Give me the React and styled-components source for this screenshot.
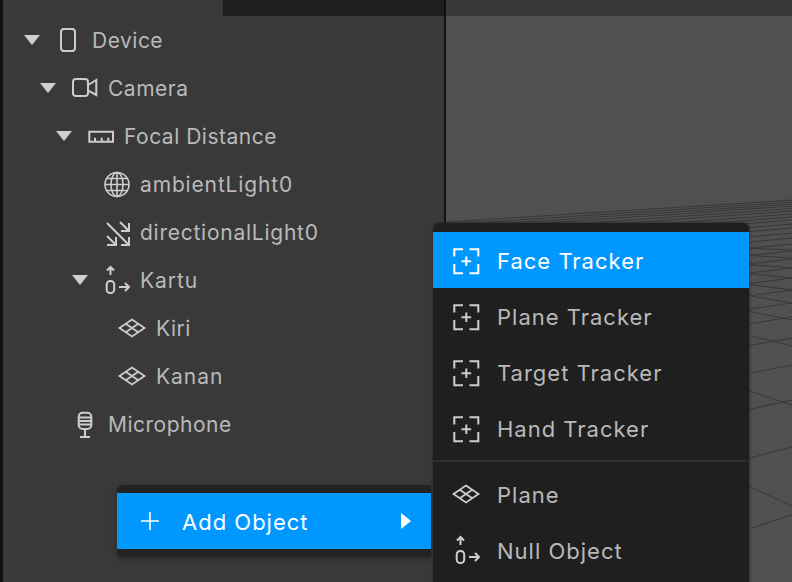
import styled, { createGlobalStyle } from "styled-components";

const Global = createGlobalStyle`
    html, body { margin: 0; padding: 0; background: #393939; }
    * { box-sizing: border-box; }
`;
const Screen = styled.div`
    width: 792px;
    height: 582px;
    overflow: hidden;
    position: relative;
    display: flex;
    font-family: Inter, "Noto Sans", sans-serif;
`;
const Sidebar = styled.aside`
    width: 446px;
    flex: none;
    background: #393939;
    border-left: 3px solid #111;
    border-right: 2px solid #111;
    display: flex;
    flex-direction: column;
`;
const LeftTab = styled.div`
    height: 16px;
    flex: none;
    margin-left: 220px;
    background: #1f1f1f;
`;
const Tree = styled.ul`
    list-style: none;
    margin: 0;
    padding: 0;
`;
const Row = styled.li`
    height: 48px;
    display: flex;
    align-items: center;
    padding-left: ${(p) => p.$indent}px;
    color: #b9b9b9;
    font-size: 21px;
    letter-spacing: ${(p) => p.$track || 0.5}px;
`;
const Caret = styled.span`
    width: 0;
    height: 0;
    flex: none;
    margin-right: 12px;
    border-left: 8px solid transparent;
    border-right: 8px solid transparent;
    border-top: 10px solid #cfcfcf;
`;
const IconSlot = styled.span`
    width: 32px;
    height: 32px;
    flex: none;
    margin-right: 8px;
    display: flex;
    align-items: center;
    justify-content: center;
    color: #cdcdcd;
`;
const Viewport = styled.main`
    flex: 1;
    background: #505050;
    display: flex;
    flex-direction: column;
`;
const RightTab = styled.div`
    height: 16px;
    flex: none;
    background: #383838;
`;
const Grid = styled.svg`
    flex: 1;
    width: 100%;
    display: block;
`;
const Trigger = styled.div`
    position: absolute;
    left: 117px;
    top: 485px;
    width: 314px;
    padding: 8px 0;
    background: #232323;
    border-radius: 6px 0 0 6px;
    box-shadow: 0 2px 6px rgba(0, 0, 0, 0.3);
`;
const TriggerRow = styled.div`
    height: 56px;
    display: flex;
    align-items: center;
    padding-left: 17px;
    background: #0098ff;
    color: #fff;
    font-size: 22px;
    letter-spacing: 1px;
`;
const TriggerLabel = styled.span`
    flex: 1;
    margin-left: 16px;
    padding-top: 2px;
`;
const Arrow = styled.span`
    width: 0;
    height: 0;
    margin-right: 20px;
    border-top: 8px solid transparent;
    border-bottom: 8px solid transparent;
    border-left: 10px solid #fff;
`;
const Menu = styled.div`
    position: absolute;
    left: 433px;
    top: 223px;
    width: 316px;
    height: 380px;
    padding-top: 9px;
    background: #1f1f1f;
    border-radius: 6px 6px 0 0;
    box-shadow: 0 0 2px 1px rgba(46, 46, 46, 0.9);
`;
const MenuItem = styled.div`
    height: 56px;
    display: flex;
    align-items: center;
    padding: 2px 0 0 17px;
    gap: 15px;
    font-size: 22px;
    letter-spacing: 1px;
    color: ${(p) => (p.$active ? "#fff" : "#b9b9b9")};
    background: ${(p) => (p.$active ? "#0098ff" : "transparent")};
`;
const MenuIcon = styled.span`
    width: 32px;
    height: 32px;
    display: flex;
    align-items: center;
    justify-content: center;
    margin-top: ${(p) => (p.$lift ? -2 : 0)}px;
    color: ${(p) => (p.$active ? "#fff" : "#cdcdcd")};
`;
const Divider = styled.div`
    height: 2px;
    margin: 4px 0;
    background: #2e2e2e;
`;

const Svg = ({ children, stroke = 2 }) => (
    <svg width="32" height="32" viewBox="0 0 32 32" fill="none" stroke="currentColor" strokeWidth={stroke}>
        {children}
    </svg>
);
const PhoneIcon = () => <Svg><rect x="9" y="5" width="14" height="22" rx="3" /></Svg>;
const CameraIcon = () => (
    <Svg>
        <rect x="5" y="7" width="15" height="17" rx="3" />
        <path d="M20.300 13l8-5v15l-8-4.300" />
    </Svg>
);
const RulerIcon = () => (
    <Svg><path d="M5.300 11.700H29v10H5.300zM11 21.700v-4M17.700 21.700v-4M24.300 21.700v-4" /></Svg>
);
const GlobeIcon = () => (
    <Svg stroke={1.6}>
        <circle cx="17" cy="16.500" r="12" />
        <ellipse cx="17" cy="16.500" rx="6" ry="12" />
        <path d="M17 4.500v24M5 16.500h24M7 10.500h20M7 22.500h20" />
    </Svg>
);
const LightIcon = () => (
    <Svg>
        <path d="M7 7l22 22M21 29h8v-8M20 6l9 9M21 15h8V7M7 20l9 9M7 29h9v-8" />
    </Svg>
);
const NullIcon = () => (
    <Svg>
        <path d="M10.500 11V3M7 6.500l3.500-3.500 3.500 3.500" />
        <rect x="6.700" y="17" width="7.500" height="12" rx="3.500" />
        <path d="M19 23h9.500M25 19l4 4-4 4" />
    </Svg>
);
const PlaneIcon = () => (
    <Svg stroke={1.8}>
        <path d="M16 7.500L28.500 16 16 24.500 3.500 16zM9.750 11.750l12.500 8.500M22.250 11.750l-12.500 8.500" />
    </Svg>
);
const MicIcon = () => (
    <Svg>
        <rect x="10.700" y="4.700" width="12.600" height="16.300" rx="4" />
        <path d="M10.700 9.500h12.600M10.700 13h12.600M10.700 16.500h12.600M17 21v8M12 29h10" />
    </Svg>
);
const TrackerIcon = () => (
    <Svg>
        <path d="M4.300 11.600V4.300H13M19.500 4.300h8.800v7.300M28.300 19v9.300h-8.800M13 28.300H4.300V19M16.300 11.500v9.600M11.500 16.300h9.600" />
    </Svg>
);
const PlusIcon = () => (
    <Svg stroke={1.6}><path d="M16 7v18M7 16h18" /></Svg>
);

const rows = [
    { label: "Device", indent: 21, caret: true, icon: <PhoneIcon /> },
    { label: "Camera", indent: 37, caret: true, icon: <CameraIcon /> },
    { label: "Focal Distance", indent: 53, caret: true, icon: <RulerIcon /> },
    { label: "ambientLight0", indent: 97, track: 0.85, icon: <GlobeIcon /> },
    { label: "directionalLight0", indent: 97, track: 0.75, icon: <LightIcon /> },
    { label: "Kartu", indent: 69, track: 0.95, caret: true, icon: <NullIcon /> },
    { label: "Kiri", indent: 113, icon: <PlaneIcon /> },
    { label: "Kanan", indent: 113, track: 0.95, icon: <PlaneIcon /> },
    { label: "Microphone", indent: 65, icon: <MicIcon /> },
];

const trackers = ["Face Tracker", "Plane Tracker", "Target Tracker", "Hand Tracker"];

// y of each floor line where it leaves the right edge of the window
const risingLines = [200, 202, 204, 206, 208.5, 211, 214, 217, 220, 224, 228, 233, 238, 244, 251, 259, 268, 278, 290, 303, 317, 338, 365, 400, 447, 515];
const fallingLines = [[250, 0.04], [258, 0.06], [268, 0.08], [278, 0.1], [290, 0.13], [303, 0.17], [320, 0.2], [346, 0.244], [405, 0.333], [506, 0.46]];

const floorLines = () => {
    const lines = [];
    risingLines.forEach((y) => {
        const slope = 0.064 + 0.00081 * (y - 200);
        lines.push(<path key={"r" + y} d={`M0 ${y - 16 + slope * 346} L346 ${y - 16}`} />);
    });
    fallingLines.forEach(([y, slope]) => {
        lines.push(<path key={"f" + y} d={`M0 ${y - 16 - slope * 346} L346 ${y - 16}`} />);
    });
    return lines;
};

export default function App() {
    return (
        <Screen>
            <Global />
            <Sidebar>
                <LeftTab />
                <Tree>
                    {rows.map((r) => (
                        <Row key={r.label} $indent={r.indent} $track={r.track}>
                            {r.caret && <Caret />}
                            <IconSlot>{r.icon}</IconSlot>
                            {r.label}
                        </Row>
                    ))}
                </Tree>
            </Sidebar>
            <Viewport>
                <RightTab />
                <Grid viewBox="0 0 346 566" stroke="#383838" strokeWidth="1" fill="none">
                    {floorLines()}
                </Grid>
            </Viewport>
            <Trigger>
                <TriggerRow>
                    <PlusIcon />
                    <TriggerLabel>Add Object</TriggerLabel>
                    <Arrow />
                </TriggerRow>
            </Trigger>
            <Menu>
                {trackers.map((t, i) => (
                    <MenuItem key={t} $active={i === 0}>
                        <MenuIcon $active={i === 0}><TrackerIcon /></MenuIcon>
                        {t}
                    </MenuItem>
                ))}
                <Divider />
                <MenuItem><MenuIcon $lift><PlaneIcon /></MenuIcon>Plane</MenuItem>
                <MenuItem><MenuIcon $lift><NullIcon /></MenuIcon>Null Object</MenuItem>
            </Menu>
        </Screen>
    );
}
